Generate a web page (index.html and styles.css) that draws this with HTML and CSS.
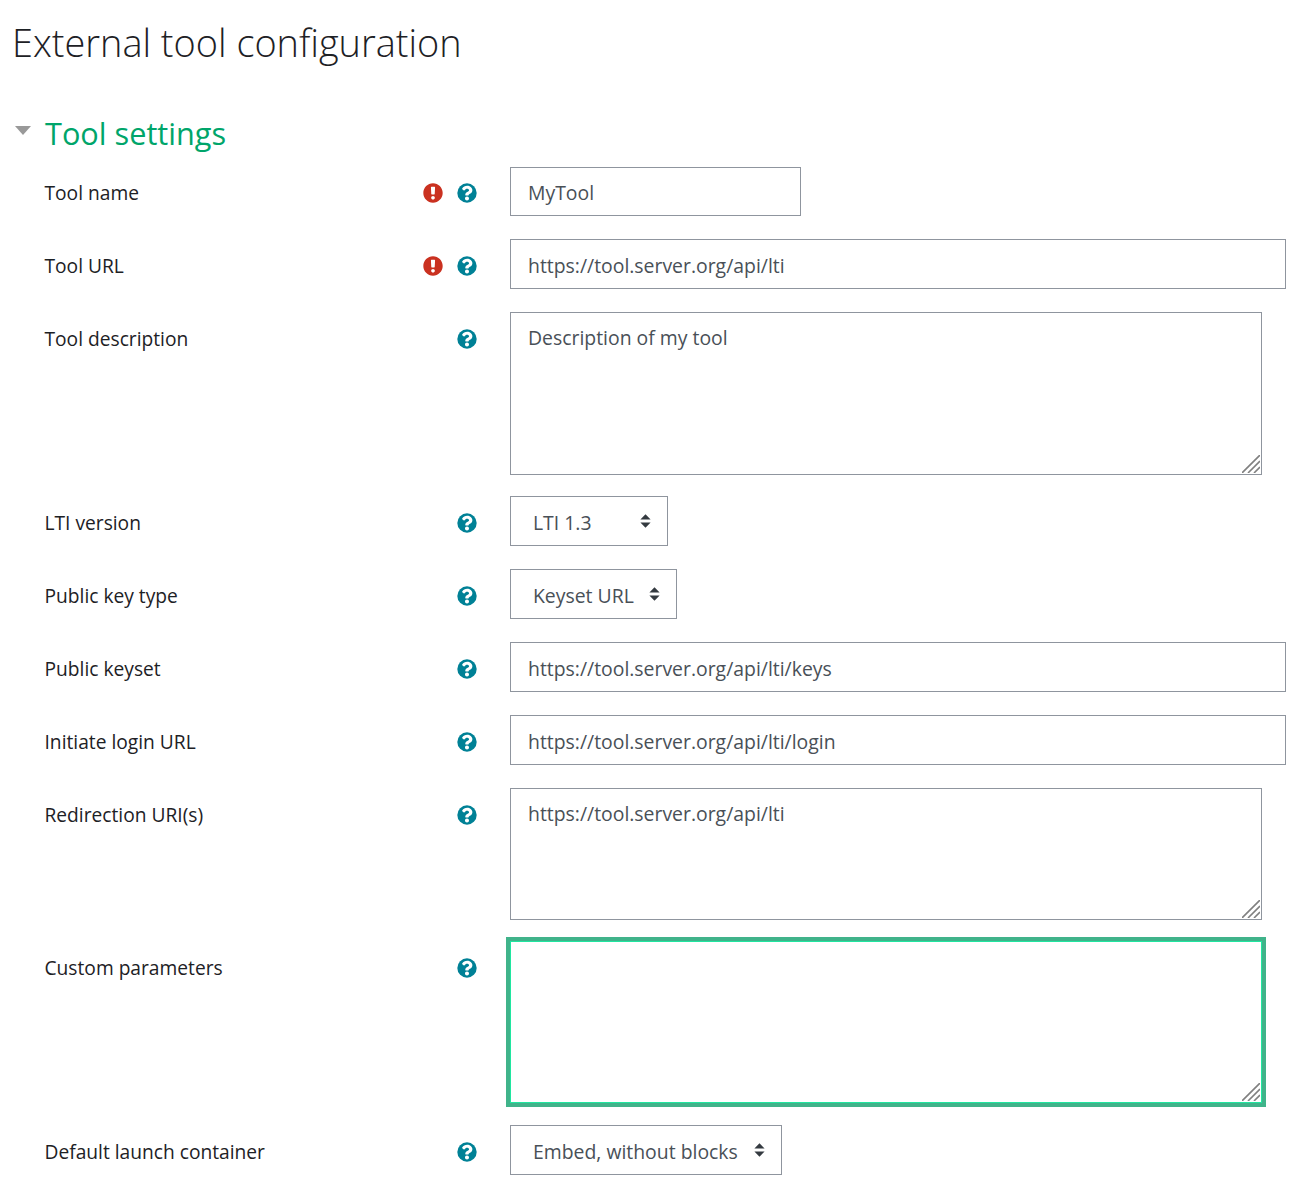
FILE: index.html
```html
<!DOCTYPE html>
<html lang="en">
<head>
    <meta charset="UTF-8">
    <title>External tool configuration</title>
    <link rel="stylesheet" href="styles.css">
</head>
<body>
    <svg class="icon-defs" aria-hidden="true">
        <symbol id="i-required" viewBox="0 0 512 512">
            <path fill-rule="evenodd" d="M504 256c0 136.997-111.043 248-248 248S8 392.997 8 256C8 119.083 119.043 8 256 8s248 111.083 248 248zM256 330c-26 0-47 21-47 47s21 47 47 47 47-21 47-47-21-47-47-47zM203 112l9 172c.4 7 6 12 13 12h62c7 0 12.6-5 13-12l9-172c.4-8-6-14-13-14h-80c-7 0-13 6-13 14z"/>
        </symbol>
        <symbol id="i-help" viewBox="0 0 512 512">
            <circle cx="256" cy="256" r="248"/>
            <path class="help-mark" transform="translate(256 256) scale(1.12) translate(-256 -256)" d="M262.655 90c-54.497 0-89.255 22.957-116.549 63.758-3.536 5.286-2.353 12.415 2.715 16.258l34.699 26.31c5.205 3.947 12.621 3.008 16.665-2.122 17.864-22.658 30.113-35.797 57.303-35.797 20.429 0 45.698 13.148 45.698 32.958 0 14.976-12.363 22.667-32.534 33.976C247.128 238.528 216 254.941 216 296v4c0 6.627 5.373 12 12 12h56c6.627 0 12-5.373 12-12v-1.333c0-28.462 83.186-29.647 83.186-106.667 0-58.002-60.165-102-116.531-102zM256 338c-25.365 0-46 20.635-46 46 0 25.364 20.635 46 46 46s46-20.636 46-46c0-25.365-20.635-46-46-46z"/>
        </symbol>
        <symbol id="i-sort" viewBox="0 0 11 14">
            <path d="M5.5 0.3 10.6 5.6H0.4zM0.4 8.4H10.6L5.5 13.7z"/>
        </symbol>
        <symbol id="i-grip" viewBox="0 0 18 18">
            <path d="M0 18 18 0M6 18 18 6M12 18 18 12"/>
        </symbol>
    </svg>

    <h1 class="page-title">External tool configuration</h1>

    <form class="settings">
        <h2 class="section-title"><span class="caret"></span>Tool settings</h2>

        <div class="row row-first">
            <label class="row-label">Tool name</label>
            <div class="row-icons">
                <svg class="icon icon-required"><use href="#i-required"/></svg>
                <svg class="icon icon-help"><use href="#i-help"/></svg>
            </div>
            <input class="field field-short" type="text" value="MyTool">
        </div>

        <div class="row">
            <label class="row-label">Tool URL</label>
            <div class="row-icons">
                <svg class="icon icon-required"><use href="#i-required"/></svg>
                <svg class="icon icon-help"><use href="#i-help"/></svg>
            </div>
            <input class="field field-wide" type="text" value="https://tool.server.org/api/lti">
        </div>

        <div class="row row-area">
            <label class="row-label">Tool description</label>
            <div class="row-icons"><svg class="icon icon-help"><use href="#i-help"/></svg></div>
            <div class="area-wrap">
                <textarea class="area area-desc">Description of my tool</textarea>
                <svg class="area-grip"><use href="#i-grip"/></svg>
            </div>
        </div>

        <div class="row">
            <label class="row-label">LTI version</label>
            <div class="row-icons"><svg class="icon icon-help"><use href="#i-help"/></svg></div>
            <div class="select-wrap">
                <select class="select select-lti"><option>LTI 1.3</option></select>
                <svg class="select-arrow"><use href="#i-sort"/></svg>
            </div>
        </div>

        <div class="row">
            <label class="row-label">Public key type</label>
            <div class="row-icons"><svg class="icon icon-help"><use href="#i-help"/></svg></div>
            <div class="select-wrap">
                <select class="select select-key"><option>Keyset URL</option></select>
                <svg class="select-arrow"><use href="#i-sort"/></svg>
            </div>
        </div>

        <div class="row">
            <label class="row-label">Public keyset</label>
            <div class="row-icons"><svg class="icon icon-help"><use href="#i-help"/></svg></div>
            <input class="field field-wide" type="text" value="https://tool.server.org/api/lti/keys">
        </div>

        <div class="row">
            <label class="row-label">Initiate login URL</label>
            <div class="row-icons"><svg class="icon icon-help"><use href="#i-help"/></svg></div>
            <input class="field field-wide" type="text" value="https://tool.server.org/api/lti/login">
        </div>

        <div class="row row-area">
            <label class="row-label">Redirection URI(s)</label>
            <div class="row-icons"><svg class="icon icon-help"><use href="#i-help"/></svg></div>
            <div class="area-wrap">
                <textarea class="area area-redirect">https://tool.server.org/api/lti</textarea>
                <svg class="area-grip"><use href="#i-grip"/></svg>
            </div>
        </div>

        <div class="row row-custom">
            <label class="row-label">Custom parameters</label>
            <div class="row-icons"><svg class="icon icon-help"><use href="#i-help"/></svg></div>
            <div class="area-wrap">
                <textarea class="area area-custom"></textarea>
                <svg class="area-grip"><use href="#i-grip"/></svg>
            </div>
        </div>

        <div class="row">
            <label class="row-label">Default launch container</label>
            <div class="row-icons"><svg class="icon icon-help"><use href="#i-help"/></svg></div>
            <div class="select-wrap">
                <select class="select select-launch"><option>Embed, without blocks</option></select>
                <svg class="select-arrow"><use href="#i-sort"/></svg>
            </div>
        </div>
    </form>
</body>
</html>
```

FILE: styles.css
```css
* {
    box-sizing: border-box;
}
body {
    margin: 0;
    padding: 0 0 8px;
    background: #fff;
    color: #1d2125;
    font-family: "Open Sans", "Noto Sans", sans-serif;
    font-size: 19.2px;
}
.icon-defs {
    display: none;
}
.page-title {
    margin: 0;
    padding: 17px 0 0 12px;
    height: 106px;
    font-size: 37.9px;
    font-weight: 300;
    line-height: 50px;
}
.section-title {
    display: flex;
    align-items: center;
    margin: 0 0 14px;
    padding-top: 6px;
    height: 47px;
    color: #00a56a;
    font-size: 30.7px;
    font-weight: 400;
}
.caret {
    width: 0;
    height: 0;
    margin: 0 14px 4px 15px;
    border-left: 8px solid transparent;
    border-right: 8px solid transparent;
    border-top: 9px solid #999;
}
.row {
    display: flex;
    align-items: flex-start;
    margin-bottom: 23px;
}
.row-area {
    margin-bottom: 21px;
}
.row-custom {
    margin-bottom: 22px;
}
.row-label {
    width: 377px;
    padding: 14px 0 0 44.5px;
    line-height: 26px;
}
.row-first .row-label {
    padding-top: 13px;
}
.row-icons {
    display: flex;
    justify-content: flex-end;
    gap: 14px;
    width: 100px;
    padding-top: 17px;
}
.row-first .row-icons {
    padding-top: 16px;
}
.icon {
    width: 20px;
    height: 20px;
}
.icon-required {
    fill: #ca3120;
}
.icon-help {
    fill: #008196;
}
.help-mark {
    fill: #fff;
}
.field, .area, .select {
    display: block;
    border: 1px solid #8f959e;
    border-radius: 0;
    background: #fff;
    color: #495057;
    font: inherit;
    font-size: 19.4px;
    outline: none;
}
.field, .select-wrap, .area-wrap {
    margin-left: 33px;
}
.field {
    height: 50px;
    padding: 2px 17px 0;
}
.field-short {
    width: 291px;
    height: 49px;
}
.field-wide {
    width: 776px;
}
.area-wrap {
    position: relative;
}
.area {
    width: 752px;
    padding: 12px 17px;
    line-height: 26px;
    resize: none;
}
.area-desc {
    height: 163px;
}
.area-redirect {
    height: 132px;
}
.area-custom {
    height: 162px;
    border-color: #20e6a0;
    box-shadow: 0 0 0 4px #40b38a;
}
.area-grip {
    position: absolute;
    right: 2px;
    bottom: 2px;
    width: 18px;
    height: 18px;
    fill: none;
    stroke: #808080;
    stroke-width: 1.6;
    pointer-events: none;
}
.select-wrap {
    position: relative;
}
.select {
    appearance: none;
    height: 50px;
    padding: 3px 22px 0;
}
.select-lti {
    width: 158px;
}
.select-key {
    width: 167px;
}
.select-launch {
    width: 272px;
}
.select-arrow {
    position: absolute;
    top: 18px;
    right: 17px;
    width: 11px;
    height: 14px;
    fill: #343a40;
}
```
